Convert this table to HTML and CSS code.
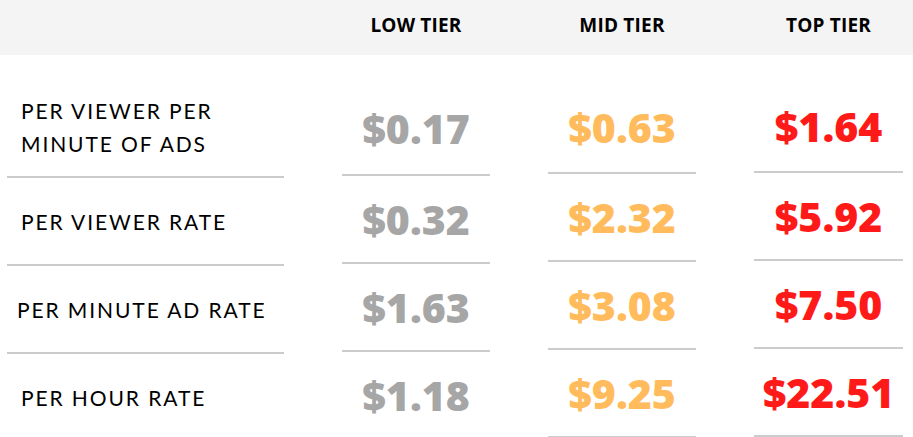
FILE: index.html
```html
<!DOCTYPE html>
<html>
<head>
<meta charset="utf-8">
<link rel="stylesheet" href="styles.css">
</head>
<body>
<div class="head">
  <div class="head-cell"></div>
  <div class="head-cell">LOW TIER</div>
  <div class="head-cell">MID TIER</div>
  <div class="head-cell">TOP TIER</div>
</div>
<div class="table">
  <div class="col col--labels">
    <div class="cell cell--first label">PER VIEWER PER<br>MINUTE OF ADS</div>
    <div class="cell label">PER VIEWER RATE</div>
    <div class="cell label label--tight">PER MINUTE AD RATE</div>
    <div class="cell label">PER HOUR RATE</div>
  </div>
  <div class="col col--low">
    <div class="cell cell--first value">$0.17</div>
    <div class="cell value">$0.32</div>
    <div class="cell value">$1.63</div>
    <div class="cell value">$1.18</div>
  </div>
  <div class="col col--mid">
    <div class="cell cell--first value">$0.63</div>
    <div class="cell value">$2.32</div>
    <div class="cell value">$3.08</div>
    <div class="cell value">$9.25</div>
  </div>
  <div class="col col--top">
    <div class="cell cell--first value">$1.64</div>
    <div class="cell value">$5.92</div>
    <div class="cell value">$7.50</div>
    <div class="cell value">$22.51</div>
  </div>
</div>
</body>
</html>
```
FILE: styles.css
```css
html, body {
  margin: 0;
  padding: 0;
  background: #ffffff;
  overflow: hidden;
}

.head,
.table {
  display: grid;
  grid-template-columns: 277px 148px 148px 149px;
  column-gap: 58px;
  padding-left: 7px;
}

.head {
  height: 55px;
  background: #f4f4f4;
  align-items: center;
}

.head-cell {
  text-align: center;
  font-family: "Open Sans", sans-serif;
  font-weight: 700;
  font-size: 19px;
  font-stretch: 92%;
  letter-spacing: 0.2px;
  color: #000;
  margin-top: -5px;
}

.col {
  display: flex;
  flex-direction: column;
}

.cell {
  height: 86px;
  flex: none;
  border-bottom: 2px solid #cccccc;
  display: flex;
  align-items: center;
}

.cell--first {
  height: var(--first);
  padding-top: 22px;
  box-sizing: content-box;
}

.col--labels { --first: 99px; }
.col--low { --first: 97px; }
.col--mid { --first: 95px; }
.col--top { --first: 94px; }

.col--low .cell--first,
.col--mid .cell--first,
.col--top .cell--first {
  padding-top: 26px;
}
.col--low { --first: 93px; }
.col--mid { --first: 91px; }
.col--top { --first: 90px; }

.label {
  padding-left: 14px;
  font-family: "Lato", sans-serif;
  font-size: 21px;
  letter-spacing: 1.9px;
  line-height: 33px;
  color: #000;
}

.label--tight {
  padding-left: 10px;
}

.value {
  justify-content: center;
  font-family: "Open Sans", sans-serif;
  font-weight: 800;
  font-size: 41px;
  letter-spacing: 0;
}

.col--low .value { color: #a6a6a6; }
.col--mid .value { color: #ffbb5c; }
.col--top .value { color: #ff1a1a; }
```
